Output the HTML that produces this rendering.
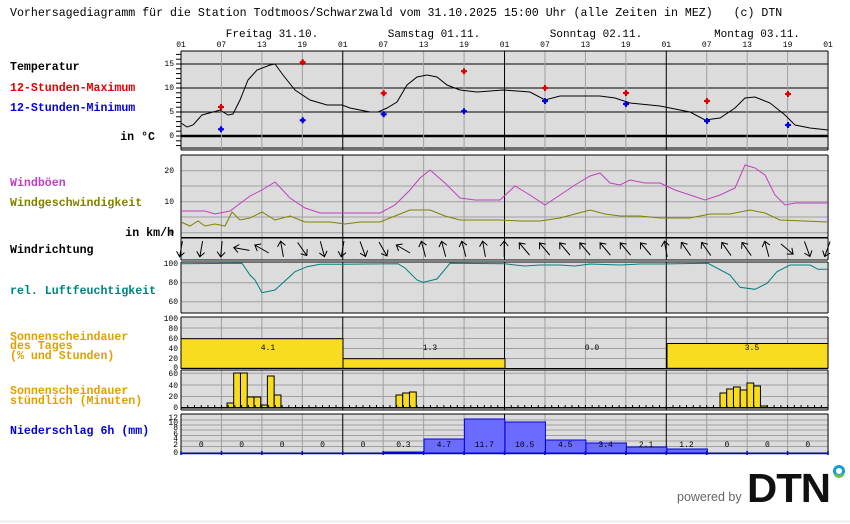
<!DOCTYPE html>
<html><head><meta charset="utf-8"><style>
html,body{margin:0;padding:0;background:#fff;width:850px;height:524px;overflow:hidden}
svg{display:block}
text{font-family:"Liberation Mono",monospace}
.lb{font-size:11.6px;font-weight:bold}
.ax{font-size:8px}
</style></head><body>
<svg id="s" width="850" height="524" xmlns="http://www.w3.org/2000/svg">
<text x="10" y="16" style="font-size:11.6px;white-space:pre" xml:space="preserve">Vorhersagediagramm für die Station Todtmoos/Schwarzwald vom 31.10.2025 15:00 Uhr (alle Zeiten in MEZ)   (c) DTN</text>
<g class="lb">
<text x="10" y="70">Temperatur</text>
<text x="10" y="91" fill="#e00000">12-Stunden-Maximum</text>
<text x="10" y="111" fill="#0000e0">12-Stunden-Minimum</text>
<text x="155" y="140" text-anchor="end">in °C</text>
<text x="10" y="186" fill="#c040c0">Windböen</text>
<text x="10" y="206" fill="#808000">Windgeschwindigkeit</text>
<text x="174" y="236" text-anchor="end">in km/h</text>
<text x="10" y="253">Windrichtung</text>
<text x="10" y="294" fill="#008080">rel. Luftfeuchtigkeit</text>
<text x="10" y="340" fill="#e0a000">Sonnenscheindauer</text>
<text x="10" y="349" fill="#e0a000">des Tages</text>
<text x="10" y="359" fill="#e0a000">(% und Stunden)</text>
<text x="10" y="394" fill="#e0a000">Sonnenscheindauer</text>
<text x="10" y="404" fill="#e0a000">stündlich (Minuten)</text>
<text x="10" y="434" fill="#0000e0">Niederschlag 6h (mm)</text>
</g>
<g style="font-size:11px" text-anchor="middle">
<text x="272" y="37">Freitag 31.10.</text>
<text x="434" y="37">Samstag 01.11.</text>
<text x="596" y="37">Sonntag 02.11.</text>
<text x="757" y="37">Montag 03.11.</text>
</g>
<g id="g"></g>
<text x="677" y="501" style="font-family:'Liberation Sans',sans-serif;font-size:12.5px" fill="#666">powered by</text>
<text x="747" y="502" style="font-family:'Liberation Sans',sans-serif;font-size:41px;font-weight:bold;letter-spacing:-1px" fill="#111" textLength="83" lengthAdjust="spacingAndGlyphs">DTN</text>
<circle cx="839" cy="471" r="4.5" fill="none" stroke="#1a9ad6" stroke-width="3"/>
<path d="M835 474 A4.5 4.5 0 0 0 843 474" fill="none" stroke="#6cc04a" stroke-width="3"/>
<line x1="0" y1="521.5" x2="850" y2="521.5" stroke="#eee" stroke-width="2"/>
</svg>
<script>
var g=document.getElementById('g'),h='';
function X(hr){return 181+hr*6.74;}
function ln(x1,y1,x2,y2,c,w){h+='<line x1="'+x1+'" y1="'+y1+'" x2="'+x2+'" y2="'+y2+'" stroke="'+c+'" stroke-width="'+(w||1)+'"/>';}
function rc(x,y,w,hh,f,s){h+='<rect x="'+x+'" y="'+y+'" width="'+w+'" height="'+hh+'" fill="'+f+'"'+(s?' stroke="'+s+'"':'')+'/>';}
function pl(p,c,w){h+='<polyline fill="none" stroke="'+c+'" stroke-width="'+(w||1)+'" points="'+p+'"/>';}
function tx(x,y,t,a,cl){h+='<text x="'+x+'" y="'+y+'" class="'+(cl||'ax')+'" text-anchor="'+(a||'end')+'">'+t+'</text>';}
var panels=[[51,150],[155,237.5],[238,260],[262,313],[317,368.5],[370,410],[414,453]];
panels.forEach(function(p){rc(181,p[0],647,p[1]-p[0],'#dcdcdc');});
for(var i=0;i<=16;i++){var x=X(i*6);tx(x,47,['01','07','13','19'][i%4],'middle');}
[64,88,112].forEach(function(y){ln(181,y,828,y,'#000');});
ln(181,136,828,136,'#000',2.5);ln(181,148,828,148,'#000');
[155,170.7,186,201.7,217].forEach(function(y){ln(181,y,828,y,'#a0a0a0');});
ln(181,232.7,828,232.7,'#a0a0a0');
[282.7,301.7].forEach(function(y){ln(181,y,828,y,'#a0a0a0');});
[328,338.5,348.5,358.5].forEach(function(y){ln(181,y,828,y,'#a0a0a0');});
[373.3,385,396.5].forEach(function(y){ln(181,y,828,y,'#a0a0a0');});
[420,425,430,435.5,441,446.5].forEach(function(y){ln(181,y,828,y,'#a0a0a0');});
for(var i=0;i<=16;i++){var x=X(i*6);var day=i%4==0;
 panels.forEach(function(p){ln(x,p[0],x,p[1],day?'#000':'#a0a0a0');});}
panels.forEach(function(p){ln(181,p[0],828,p[0],'#000');ln(181,p[1],828,p[1],'#000');ln(181,p[0],181,p[1],'#000');});
[[15,66],[10,90],[5,114],[0,138]].forEach(function(a){tx(174,a[1],a[0]);});
[[20,173],[10,204],[0,235]].forEach(function(a){tx(174,a[1],a[0]);});
[[100,266],[80,285],[60,304]].forEach(function(a){tx(178,a[1],a[0]);});
[[100,321],[80,331],[60,341],[40,351],[20,361],[0,370]].forEach(function(a){tx(178,a[1],a[0]);});
[[60,376],[40,388],[20,399],[0,410]].forEach(function(a){tx(178,a[1],a[0]);});
[[12,420],[10,425],[8,430],[6,436],[4,441],[2,447],[0,455]].forEach(function(a){tx(178,a[1],a[0]);});
for(var t=-2;t<=17;t++){var y=136-4.8*t;ln(176,y,181,y,'#000');}
pl('181,123 187,127 193,125 202,115 213,112 220,110 228,115 233,114 240,100 248,80 257,70 270,65 275,64 283,75 295,90 310,100 327,105 342,105 350,108 370,112 378,112 387,108 397,102 407,85 417,77 427,75 437,77 447,85 460,90 477,92 503,90 517,91 530,92 545,100 560,96 600,96 615,98 630,103 660,106 690,112 705,120 720,118 735,108 745,98 755,97 770,103 785,115 795,125 810,128 828,130','#000');
function dot(x,y,c){h+='<path d="M'+(x-3)+' '+y+'h6M'+x+' '+(y-3)+'v6" stroke="'+c+'" stroke-width="2"/><circle cx="'+x+'" cy="'+y+'" r="2" fill="'+c+'"/>';}
[[221,107],[302.7,62.3],[383.7,93.3],[464,71.3],[545,88],[626,93],[707,101],[788,94]].forEach(function(d){dot(d[0],d[1],'#e00000');});
[[221,129.3],[302.7,120.3],[383.7,114.3],[464,111.3],[545,101],[626,104],[707,121],[788,125]].forEach(function(d){dot(d[0],d[1],'#0000e0');});
pl('181,211 205,211 215,214 230,211 250,196 262,190 275,182 290,198 305,208 320,213 380,213 395,205 410,190 420,178 430,170 445,183 460,198 475,200 500,200 515,186 530,195 545,205 560,195 575,185 590,176 600,173 610,183 620,185 630,180 645,183 660,183 675,190 690,195 705,200 720,195 735,188 745,165 755,168 765,175 775,195 785,205 795,203 828,203','#c040c0');
pl('181,222 190,226 198,221 205,226 215,224 225,226 232,212 240,220 250,218 262,212 275,220 290,216 305,222 330,222 345,224 360,222 380,222 395,216 410,210 430,210 445,216 460,220 500,220 520,221 540,221 560,218 575,214 590,210 605,214 620,216 640,216 660,218 690,218 710,214 730,214 750,210 765,213 780,220 828,222','#808000');
var ang=[190,190,185,-80,-60,-10,145,165,190,160,150,-60,-15,-15,-15,-10,0,-40,-40,-40,-40,-40,-40,-40,-10,-35,-35,-35,-35,-15,130,160,200];
ang.forEach(function(a,i){var x=181+20.2*i;h+='<g transform="translate('+x+',249) rotate('+a+')" stroke="#000" fill="none"><path d="M0 8V-8M-4 -3L0 -8L4 -3"/></g>';});
pl('181,263.7 242,263.3 250,275 255,280 262,292.7 275,290 295,271.7 307,266.7 320,264.3 342,264.3 398,263.7 405,268 417,280 423,282.3 437,279 450,263.3 505,263.7 515,265 525,266 540,265 560,265 575,266 590,264 620,265 640,264 660,264 708,263.3 730,275 740,287.3 755,289.3 767,283.3 777,271.7 790,265 810,265 818,269.3 828,269.3','#008080');
rc(181,338.7,162,29.6,'#f8dc20','#000');rc(343,358.7,162,9.6,'#f8dc20','#000');rc(667,343.5,161,24.8,'#f8dc20','#000');
tx(268,350,'4.1','middle');tx(430,350,'1.3','middle');tx(592,350,'0.0','middle');tx(752,350,'3.5','middle');
[[227,403],[233.7,373],[240.5,373],[247.2,397],[254,397],[260.7,405],[267.4,376],[274.2,395],[396,395],[402.7,393],[409.5,392],[720,393],[726.7,389],[733.5,387],[740.2,390],[747,383],[753.7,386],[760.4,406]].forEach(function(b){rc(b[0],b[1],6.74,407.7-b[1],'#f8dc20','#000');});
ln(181,407.7,828,407.7,'#000',1.5);
for(var i=0;i<96;i++){var x=X(i+1);ln(x,405,x,407.7,'#000');}
[[383.5,452],[424,439],[464.4,419],[505,422],[545.5,440],[586,443],[626.4,447],[667,449]].forEach(function(b){rc(b[0],b[1],40.4,453-b[1],'#6b6bff','#0000e0');});
ln(181,453.5,828,453.5,'#0000e0',1.5);
for(var i=0;i<=16;i++){var x=X(i*6);ln(x,451,x,455,'#0000e0',1.5);}
['0','0','0','0','0','0.3','4.7','11.7','10.5','4.5','3.4','2.1','1.2','0','0','0'].forEach(function(t,i){tx(X(i*6+3),447,t,'middle');});
g.innerHTML=h;
</script>
</body></html>
